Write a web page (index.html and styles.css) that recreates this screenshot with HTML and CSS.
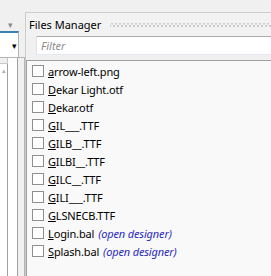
FILE: index.html
```html
<!DOCTYPE html>
<html lang="en">

<head>
    <meta charset="UTF-8">
    <meta name="viewport" content="width=device-width, initial-scale=1.0">
    <link rel="stylesheet" href="styles.css">
    <title>Files Manager</title>
</head>

<body>
    <div class="app">
        <div class="side">
            <div class="side-top"><span class="arrow gray">&#9662;</span></div>
            <div class="combo"><span class="arrow">&#9662;</span></div>
            <div class="tree">
                <div class="tree-col">
                    <div class="tree-cell"></div>
                    <div class="scroll-up">&#9652;</div>
                </div>
                <div class="tree-col2"></div>
            </div>
        </div>

        <div class="panel">
            <div class="title">
                <span class="title-text">Files Manager</span>
                <span class="grip"></span>
            </div>
            <div class="filter-row">
                <input class="filter" type="text" placeholder="Filter">
            </div>
            <div class="list" id="list"></div>
        </div>
    </div>

    <script>
        const files = [
            { name: "arrow-left.png" },
            { name: "Dekar Light.otf" },
            { name: "Dekar.otf" },
            { name: "GIL___.TTF" },
            { name: "GILB__.TTF" },
            { name: "GILBI__.TTF" },
            { name: "GILC__.TTF" },
            { name: "GILI___.TTF" },
            { name: "GLSNECB.TTF" },
            { name: "Login.bal", designer: true },
            { name: "Splash.bal", designer: true }
        ];

        const list = document.getElementById("list");

        files.forEach((file) => {
            const row = document.createElement("label");
            row.className = "row";

            const box = document.createElement("span");
            box.className = "box";
            row.appendChild(box);

            const name = document.createElement("span");
            name.className = "name";
            const key = document.createElement("u");
            key.innerText = file.name.charAt(0);
            name.appendChild(key);
            name.appendChild(document.createTextNode(file.name.slice(1)));
            row.appendChild(name);

            if (file.designer) {
                const link = document.createElement("span");
                link.className = "designer";
                link.innerText = "(open designer)";
                row.appendChild(link);
            }

            list.appendChild(row);
        });
    </script>
</body>

</html>
```

FILE: styles.css
```css
body {
    margin: 0;
    padding: 0;
    background-color: #f0f0f0;
    font-family: 'Noto Sans', 'Segoe UI', sans-serif;
    font-size: 11px;
    color: #000;
    overflow: hidden;
}

.app {
    display: flex;
    height: 276px;
}

/* left, cut-off panel */
.side {
    width: 25px;
    display: flex;
    flex-direction: column;
}

.side-top {
    height: 31px;
    position: relative;
}

.arrow {
    font-size: 9px;
    line-height: 1;
}

.arrow.gray {
    color: #8a8a8a;
    position: absolute;
    left: 8px;
    top: 20px;
}

.combo {
    width: 17px;
    height: 24px;
    border-top: 2px solid #3c7fb1;
    border-right: 1px solid #b4b4b4;
    background-color: #fff;
    display: flex;
    align-items: center;
    justify-content: flex-end;
    padding-right: 1px;
}

.tree {
    flex: 1;
    display: flex;
    border-top: 1px solid #b4b4b4;
}

.tree-col {
    width: 17px;
    background-color: #fff;
    border-right: 1px solid #a0a0a0;
}

.tree-cell {
    width: 7px;
    height: 5px;
    background-color: #f0f0f0;
    border-right: 1px solid #c8c8c8;
    border-bottom: 1px solid #c8c8c8;
}

.scroll-up {
    width: 7px;
    height: 212px;
    border-right: 1px solid #a0a0a0;
    color: #b0b0b0;
    font-size: 7px;
    line-height: 14px;
    text-align: center;
}

.tree-col2 {
    flex: 1;
    border-right: 1px solid #b4b4b4;
}

/* files manager */
.panel {
    flex: 1;
    margin-top: 12px;
    border-top: 1px solid #cccccc;
    border-left: 1px solid #cccccc;
    display: flex;
    flex-direction: column;
    background-color: #f2f2f2;
}

.title {
    height: 23px;
    display: flex;
    align-items: center;
    padding-left: 3px;
}

.title-text {
    font-size: 11px;
    white-space: nowrap;
}

.grip {
    flex: 1;
    height: 4px;
    margin-left: 9px;
    background-image:
        radial-gradient(circle, #a0a0a0 0.6px, transparent 0.8px),
        radial-gradient(circle, #a0a0a0 0.6px, transparent 0.8px);
    background-size: 4px 4px;
    background-position: 0 -1.5px, 2px 1.5px;
    background-repeat: repeat-x;
}

.filter-row {
    padding-left: 10px;
    height: 24px;
    background-color: #f0f0f0;
}

.filter {
    box-sizing: border-box;
    width: 100%;
    height: 19px;
    border: none;
    border-top: 1px solid #abadb3;
    border-bottom: 1px solid #e3e9ef;
    border-left: 1px solid #e2e3ea;
    margin: 0;
    padding: 0 4px;
    font-family: 'Noto Sans', 'Segoe UI', sans-serif;
    font-size: 11px;
    outline: none;
}

.filter::placeholder {
    color: #8d8d8d;
    font-style: italic;
}

.list {
    flex: 1;
    background-color: #f9f9f9;
    border-top: 1px solid #a0a0a0;
    border-left: 1px solid #a0a0a0;
    padding-top: 1px;
    padding-left: 5px;
}

.row {
    display: flex;
    align-items: center;
    height: 18px;
    white-space: nowrap;
    letter-spacing: -0.15px;
}

.box {
    box-sizing: border-box;
    width: 12px;
    height: 12px;
    border: 1px solid #8e8f8f;
    background-color: #fff;
    margin-right: 4px;
}

.name u {
    text-underline-offset: 1px;
}

.designer {
    margin-left: 4px;
    color: #2a2ac0;
    font-style: italic;
}
```
